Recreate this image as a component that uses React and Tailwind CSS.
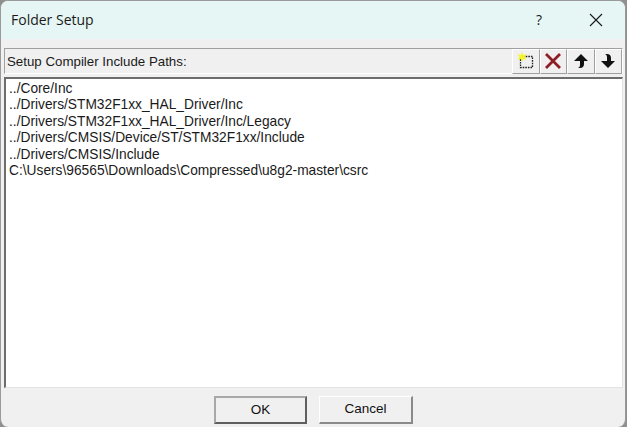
export default function App() {
  const paths = [
    "../Core/Inc",
    "../Drivers/STM32F1xx_HAL_Driver/Inc",
    "../Drivers/STM32F1xx_HAL_Driver/Inc/Legacy",
    "../Drivers/CMSIS/Device/ST/STM32F1xx/Include",
    "../Drivers/CMSIS/Include",
    "C:\\Users\\96565\\Downloads\\Compressed\\u8g2-master\\csrc",
  ];
  const tb = "w-[27.5px] h-[25px] flex items-center justify-center bg-[#f0f0f0] border-t border-l border-t-white border-l-white border-r border-b border-r-[#a0a0a0] border-b-[#a0a0a0]";
  return (
    <div className="w-[627px] h-[427px] bg-[#8f8f8f] overflow-hidden" style={{ fontFamily: '"Liberation Sans", Arial, sans-serif' }}>
      <div className="w-[626px] h-[427px] flex flex-col rounded-[8px] overflow-hidden bg-[#f0f0f0] border border-[#9a9a9a] border-b-0">
        <div className="h-[38px] shrink-0 bg-[#e6f6f5] flex items-center pl-[10px] pb-[2px]">
          <span className="text-[14px] text-[#1a1a1a] grow" style={{ fontFamily: '"Open Sans", sans-serif' }}>Folder Setup</span>
          <span className="text-[14px] text-[#1a1a1a] mr-[47px]" style={{ fontFamily: '"Open Sans", sans-serif' }}>?</span>
          <svg width="14" height="14" viewBox="0 0 14 14" className="mr-[22px] mt-[2px]"><path d="M1 1L13 13M13 1L1 13" stroke="#1a1a1a" strokeWidth="1.1" fill="none" /></svg>
        </div>
        <div className="flex flex-col grow pt-[9px] pl-[3px] pr-[2px] pb-[3px]">
          <div className="h-[26px] shrink-0 flex items-center justify-between border-t border-l border-[#a0a0a0] border-r border-r-white border-b border-b-white pl-[2px]">
            <span className="text-[13.3px] text-[#1a1a1a] pt-[1px]">Setup Compiler Include Paths:</span>
            <div className="flex">
              <div className={tb}>
                <svg width="18" height="18" viewBox="0 0 18 18">
                  <rect x="3.5" y="4.5" width="12" height="11" fill="none" stroke="#222" strokeWidth="1.3" strokeDasharray="1.6 1" />
                  <path d="M5 0L6.2 3.2L9.5 2L7.5 5L9.5 8L6.2 6.8L5 10L3.8 6.8L0.5 8L2.5 5L0.5 2L3.8 3.2Z" fill="#f7f520" />
                </svg>
              </div>
              <div className={tb}>
                <svg width="18" height="18" viewBox="0 0 18 18"><path d="M2 2L16 16M16 2L2 16" stroke="#8f1d24" strokeWidth="2.8" fill="none" /></svg>
              </div>
              <div className={tb}>
                <svg width="16" height="16" viewBox="0 0 16 16"><path d="M8 1L15 8H11V11C11 13.5 9.5 15 7 15H5C7 14 7 13 7 11V8H1Z" fill="#111" /></svg>
              </div>
              <div className={tb}>
                <svg width="16" height="16" viewBox="0 0 16 16"><path d="M8 15L15 8H11V5C11 2.5 9.5 1 7 1H5C7 2 7 3 7 5V8H1Z" fill="#111" /></svg>
              </div>
            </div>
          </div>
          <div className="mt-[3px] h-[311px] shrink-0 bg-white border-t-2 border-l-2 border-t-[#6d6d6d] border-l-[#6d6d6d] border-r border-b border-r-[#e3e3e3] border-b-[#e3e3e3] pl-[3px] pt-[2px] text-[13.75px] leading-[16.4px] text-[#1a1a1a]">
            {paths.map((p) => <div key={p}>{p}</div>)}
          </div>
          <div className="flex justify-center gap-[12px] mt-[8px]">
            <button className="w-[93px] h-[28px] bg-[#f0f0f0] text-[13.5px] text-[#111] border-t-2 border-l-2 border-r-2 border-b-2 border-t-[#a8a8a8] border-l-[#a8a8a8] border-r-[#5f5f5f] border-b-[#5f5f5f]">OK</button>
            <button className="w-[94px] h-[28px] bg-[#f0f0f0] text-[13.5px] text-[#111] border-t border-l border-t-white border-l-white border-r-2 border-b-2 border-r-[#8a8a8a] border-b-[#8a8a8a]">Cancel</button>
          </div>
        </div>
      </div>
    </div>
  );
}
